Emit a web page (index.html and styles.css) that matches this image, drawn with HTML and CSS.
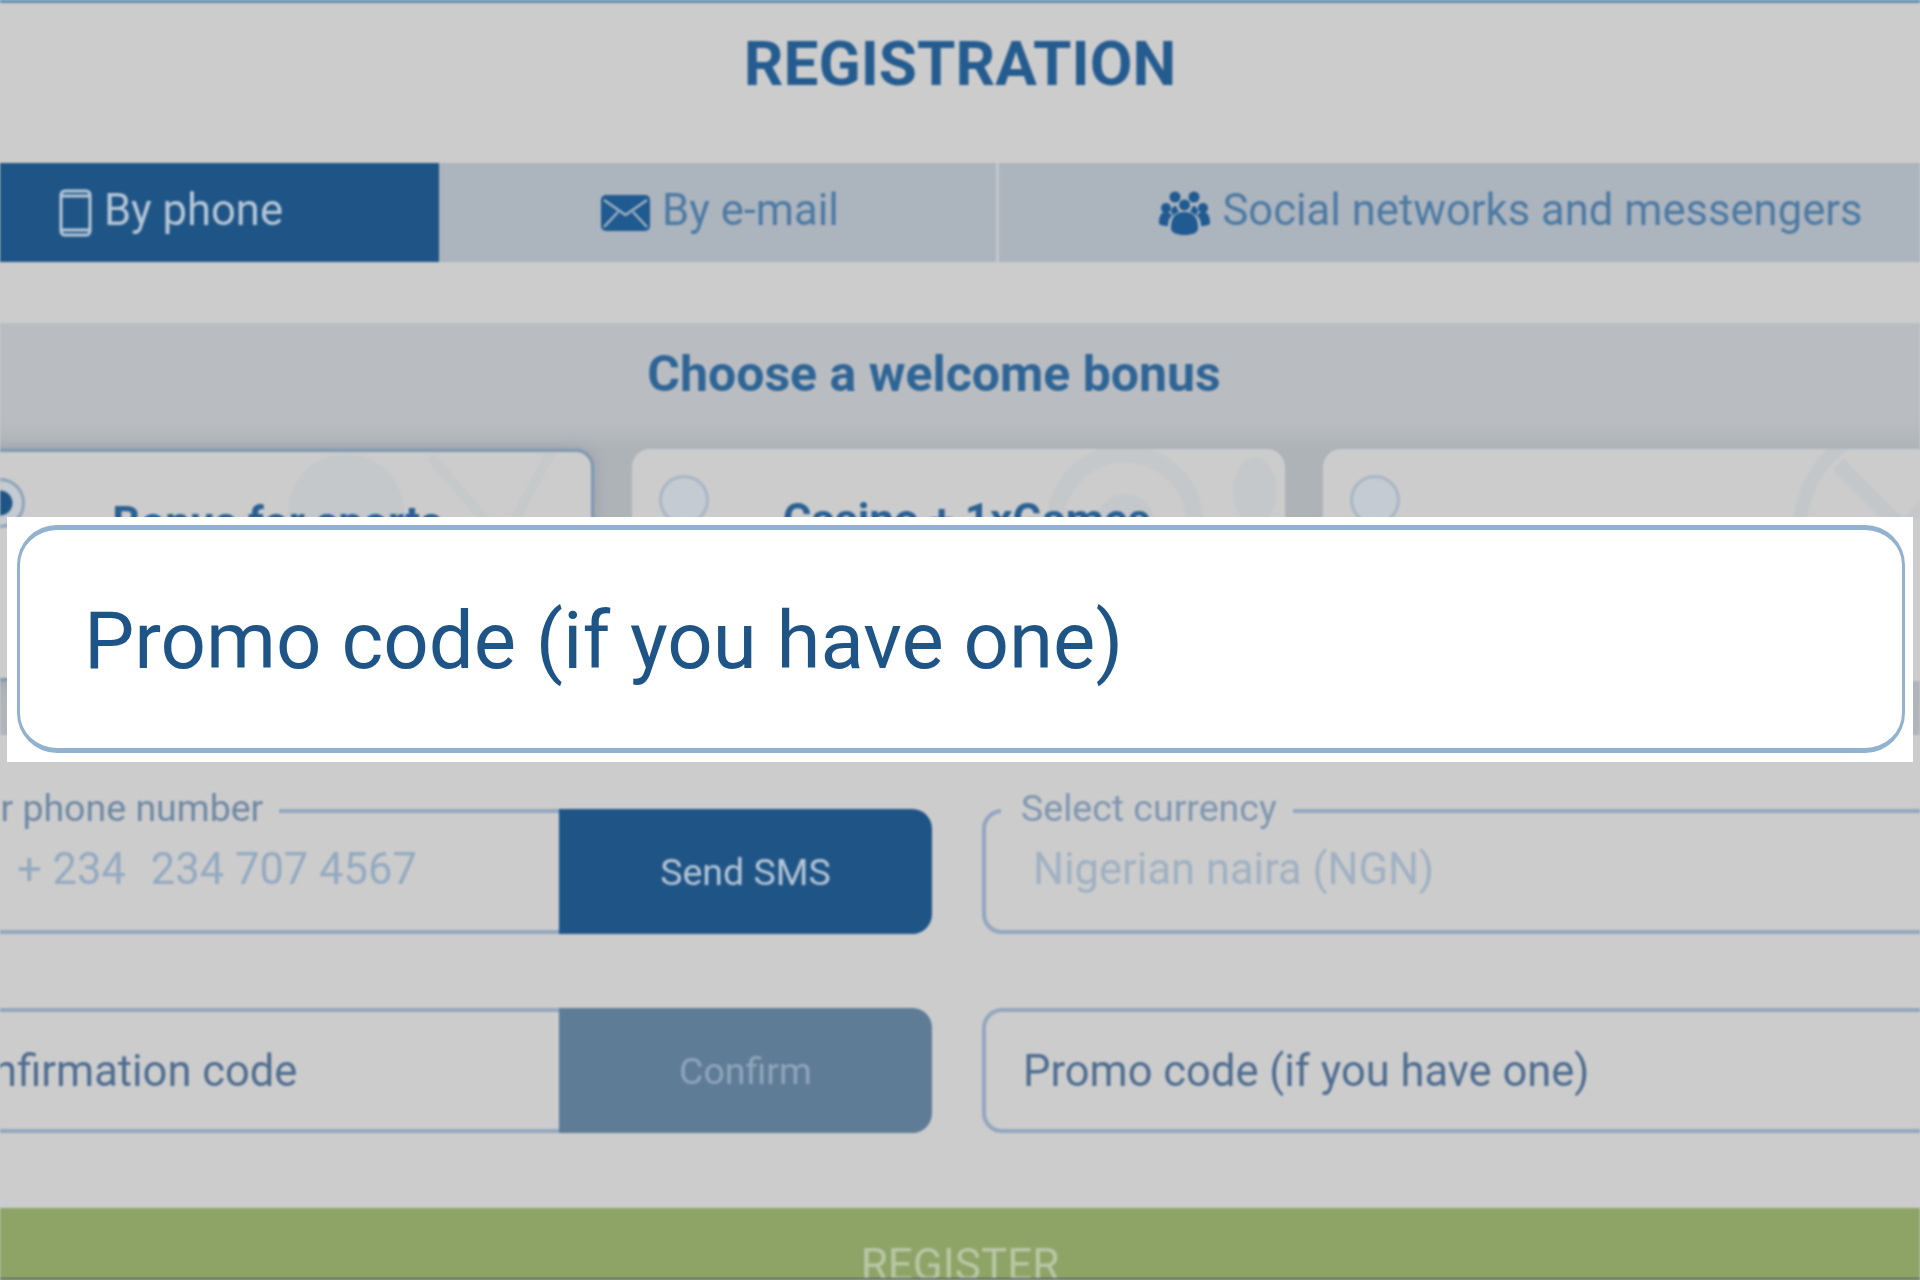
FILE: index.html
```html
<!DOCTYPE html>
<html lang="en">
<head>
<meta charset="utf-8">
<title>Registration</title>
<link rel="stylesheet" href="styles.css">
</head>
<body>
<div class="page">
  <div class="backdrop">
    <div class="topline"></div>
    <h1 class="title">REGISTRATION</h1>
    <nav class="tabs">
      <div class="tab tab-active">
        <svg class="ico-phone" viewBox="0 0 33 48"><rect x="2" y="2" width="29" height="44" rx="4" fill="none" stroke="#b9c9d9" stroke-width="3"/><path d="M2 7h29M2 41h29" stroke="#b9c9d9" stroke-width="3"/></svg>
        <span class="tab-text">By phone</span>
      </div>
      <div class="tab tab-mail">
        <svg class="ico-mail" viewBox="0 0 49 36"><rect x="0" y="0" width="49" height="36" rx="5" fill="#1f5a90"/><path d="M3 5l21.500 15L46 5M3 32l14-15M46 32L32 17" fill="none" stroke="#a3b2c2" stroke-width="2.500"/></svg>
        <span class="tab-text">By e-mail</span>
      </div>
      <div class="tab tab-social">
        <svg class="ico-users" viewBox="0 0 51 44"><g fill="#1f5a90"><circle cx="16" cy="6" r="5.500"/><circle cx="35" cy="6" r="5.500"/><circle cx="25.500" cy="14" r="5.500"/><circle cx="7" cy="17" r="5"/><circle cx="44" cy="17" r="5"/><path d="M0 32c0-8 3-11 7-11 3 0 5 2 6 4-3 2-4 5-4 10-5 0-9-1-9-3zM51 32c0-8-3-11-7-11-3 0-5 2-6 4 3 2 4 5 4 10 5 0 9-1 9-3zM12 20c1-4 3-5 5-5l3 6c-3 1-5 2-6 4zM39 20c-1-4-3-5-5-5l-3 6c3 1 5 2 6 4z"/><path d="M12 37c0-11 5-16 13.500-16S39 26 39 37c0 5-6 7-13.500 7S12 42 12 37z"/></g></svg>
        <span class="tab-text">Social networks and messengers</span>
      </div>
    </nav>
    <section class="bonus">
      <h2 class="bonus-title">Choose a welcome bonus</h2>
      <div class="cards">
        <div class="card card-on">
          <span class="radio"></span>
          <svg class="mark mark-sport" viewBox="0 0 330 70"><circle cx="85" cy="60" r="58" fill="#c5c8ca"/><path d="M170 5l60 70M290 0l-40 75" stroke="#c6c9ca" stroke-width="10" fill="none"/></svg>
          <div class="card-name">Bonus for sports</div>
        </div>
        <div class="card card-mid">
          <span class="radio"></span>
          <svg class="mark mark-casino" viewBox="0 0 270 70"><circle cx="110" cy="75" r="70" fill="none" stroke="#c5c8ca" stroke-width="18"/><circle cx="110" cy="75" r="30" fill="#c5c8ca"/><ellipse cx="240" cy="42" rx="22" ry="34" fill="#c5c8ca"/></svg>
          <div class="card-name">Casino + 1xGames</div>
        </div>
        <div class="card">
          <span class="radio"></span>
          <svg class="mark mark-cancel" viewBox="0 0 190 70"><circle cx="121" cy="80" r="104" fill="none" stroke="#c4c7c9" stroke-width="14"/><path d="M55 15l130 130M185 15L55 145" stroke="#c4c7c9" stroke-width="16"/></svg>
        </div>
      </div>
    </section>
    <div class="form">
      <div class="form-row">
        <div class="field field-btn">
          <span class="legend">Your phone number</span>
          <span class="phone-value"><span>+ 234</span><span>234 707 4567</span></span>
          <span class="btn">Send SMS</span>
        </div>
        <div class="field">
          <span class="legend">Select currency</span>
          <span class="select-value">Nigerian naira (NGN)</span>
        </div>
      </div>
      <div class="form-row">
        <div class="field field-btn">
          <span class="placeholder code-placeholder">Confirmation code</span>
          <span class="btn btn-off">Confirm</span>
        </div>
        <div class="field">
          <span class="placeholder">Promo code (if you have one)</span>
        </div>
      </div>
    </div>
    <div class="submit">REGISTER</div>
    <div class="edge"></div>
  </div>
  <div class="callout">
    <div class="callout-field">Promo code (if you have one)</div>
  </div>
</div>
</body>
</html>
```
FILE: styles.css
```css
* { box-sizing: border-box; }
html, body { margin: 0; padding: 0; background: #ccc; }
body { font-family: Roboto, "Liberation Sans", sans-serif; color: #1f5586; }
.page { position: relative; width: 1920px; height: 1280px; overflow: hidden; background: #ccc; }
.backdrop { position: relative; width: 1920px; height: 1280px; overflow: hidden; filter: blur(1.1px); background: #ccc; }
.topline { height: 3px; background: #5d90b0; }
.title { margin: 0; height: 160px; padding-top: 25px; font-size: 62px; line-height: 72px; font-weight: 700; text-align: center; color: #255c90; }
.tabs { display: flex; width: 2112px; height: 99px; margin-left: -97px; background: #acb4be; font-size: 43.600px; }
.tab { display: flex; align-items: center; justify-content: center; gap: 12px; color: #4d7aa3; }
.tab-text { padding-bottom: 4px; }
.tab-active { width: 536px; background: #1f5586; color: #b5c5d6; }
.tab-mail { width: 560px; padding-left: 5px; border-right: 3px solid #c3c7cb; }
.tab-social { flex: 1; padding-left: 8px; }
.ico-phone { width: 33px; height: 48px; }
.ico-mail { width: 49px; height: 36px; }
.ico-users { width: 51px; height: 44px; }
.bonus { width: 2112px; height: 412px; margin: 61px 0 0 -97px; padding: 0 42px; background: linear-gradient(#b9bdc2 0, #b9bdc2 100px, #aeb3b8 126px, #b0b5bb 100%); }
.bonus-title { margin: 0; height: 126px; padding: 22px 50px 0 0; font-size: 50px; line-height: 58px; font-weight: 700; text-align: center; color: #2f6596; }
.cards { display: flex; gap: 38px; height: 232px; }
.card { position: relative; flex: 1; padding: 46px 0 0 16px; background: #cccccc; border-radius: 18px; }
.card-on { flex: 0 0 649px; border: 3px solid #7e98b2; box-shadow: 0 0 14px rgba(110, 125, 140, 0.4); }
.card-mid { flex: 0 0 653px; }
.radio { position: absolute; left: 27px; top: 26px; width: 50px; height: 50px; border: 3px solid #a9b6c6; border-radius: 50%; background: #c5cbd2; }
.card-on .radio { border-color: #8ea3ba; background: radial-gradient(#1f5586 0 38%, #c5cbd2 42%); }
.mark { position: absolute; top: 0; right: 0; height: 70px; }
.mark-sport { width: 330px; }
.mark-casino { width: 270px; }
.mark-cancel { width: 190px; }
.card-name { position: relative; font-size: 44px; line-height: 50px; font-weight: 700; text-align: center; color: #2a6093; }
.form { display: flex; flex-direction: column; gap: 74px; width: 2112px; margin: 74px 0 0 -97px; }
.form-row { display: flex; gap: 50px; }
.field { position: relative; display: flex; align-items: center; flex: 1; height: 125px; padding-left: 37px; border: 4px solid #92a7be; border-radius: 20px; font-size: 43.500px; }
.field-btn { padding-right: 0; border-right: 0; }
.legend { position: absolute; left: 15px; top: -25px; padding: 0 16px 0 20px; background: #ccc; font-size: 37.500px; line-height: 40px; color: #7f96b0; }
.field-btn .legend { left: 10px; color: #6f88a5; }
.phone-value { display: flex; gap: 25px; flex: 1; padding: 0 0 5px 73px; color: #94aac1; }
.select-value { padding: 0 0 5px 10px; color: #a0b1c3; }
.placeholder { padding-top: 1px; color: #4f6d90; }
.code-placeholder { flex: 1; margin-left: -4px; }
.btn { display: flex; align-items: center; justify-content: center; width: 373px; height: 125px; margin: -4px 0; border-radius: 0 20px 20px 0; background: #1f5586; font-size: 37.500px; color: #b5c5d6; }
.btn-off { background: #5f7c97; color: #8fa5bb; }
.submit { height: 124px; margin-top: 75px; padding-top: 35px; background: #8ea466; font-size: 44px; line-height: 44px; text-align: center; color: #b9c6a5; }
.edge { position: absolute; left: 0; right: 0; bottom: 0; height: 2px; background: #566560; }
.callout { position: absolute; left: 7px; top: 517px; width: 1906px; height: 245px; padding: 8px 8px 9px 10px; background: #fff; }
.callout-field { display: flex; align-items: center; height: 100%; padding: 2px 0 0 64px; border-style: solid; border-color: #92b2d0; border-width: 5px 3px; border-radius: 40px; background: #fff; font-size: 79.800px; color: #1f5586; }
```
